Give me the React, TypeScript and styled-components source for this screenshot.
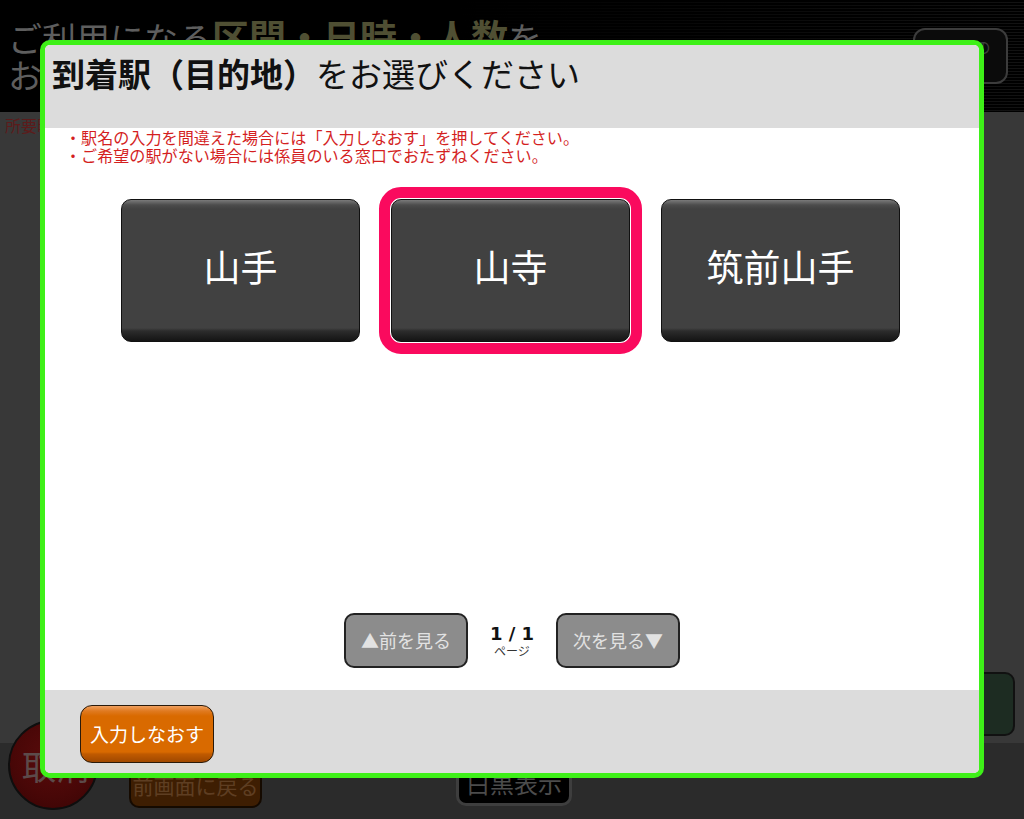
import React from "react";
import styled, { createGlobalStyle } from "styled-components";

const JP = `"Noto Sans CJK JP", "Noto Sans", "DejaVu Sans", sans-serif`;

const GlobalStyle = createGlobalStyle`
  html, body {
    margin: 0;
    padding: 0;
    background: #383838;
    overflow: hidden;
  }
  body {
    font-family: ${JP};
  }
  * {
    box-sizing: border-box;
  }
`;

/* ---------- dimmed screen behind the dialog ---------- */

const Screen = styled.div`
  width: 1024px;
  height: 819px;
  display: flex;
  flex-direction: column;
`;

const TopBar = styled.header`
  height: 112px;
  flex: none;
  display: flex;
  align-items: center;
  justify-content: space-between;
  padding: 0 16px 0 8px;
  background-image: linear-gradient(to right, #000 45%, rgba(0, 0, 0, 0) 100%),
    repeating-linear-gradient(to bottom, #000 0 2px, #121212 2px 3px);
`;

const Lead = styled.div`
  font-size: 34px;
  line-height: 37px;
  color: #5e5e5e;
  margin-top: -2px;
  white-space: nowrap;
`;

const Strong = styled.b`
  color: #4f4f33;
  font-weight: 700;
  font-size: 37px;
`;

const GuideBox = styled.div`
  width: 95px;
  height: 56px;
  border: 2px solid #3c3c3c;
  border-radius: 12px;
  background: #0b0b0b;
  color: #3e3e3e;
  font-size: 15px;
  line-height: 18px;
  display: flex;
  align-items: center;
  justify-content: center;
  text-align: center;
`;

const Middle = styled.main`
  flex: 1;
  display: flex;
  flex-direction: column;
  justify-content: space-between;
  align-items: flex-start;
  padding: 3px 9px 7px 5px;
  background: #383838;
`;

const Duration = styled.div`
  font-size: 16px;
  line-height: 20px;
  color: #5c1b1b;
`;

const SideButton = styled.div`
  align-self: flex-end;
  width: 140px;
  height: 64px;
  border: 2px solid #111;
  border-radius: 10px;
  background: #1d2c22;
`;

const BottomBar = styled.footer`
  height: 76px;
  flex: none;
  display: flex;
  align-items: flex-end;
  padding: 0 0 0 8px;
  background: #2b2b2b;
`;

const CancelCircle = styled.div`
  width: 90px;
  height: 90px;
  margin-bottom: 9px;
  border-radius: 50%;
  border: 2px solid #0e0e0e;
  background: radial-gradient(circle at 50% 40%, #5a0b0b 0%, #480707 60%, #380404 100%);
  color: #5c4a4a;
  font-size: 34px;
  display: flex;
  align-items: center;
  padding-left: 12px;
`;

const BackButton = styled.div`
  width: 133px;
  height: 46px;
  margin: 0 0 11px 31px;
  border: 2px solid #150a00;
  border-radius: 10px;
  background: #3e1e02;
  color: #5e3e22;
  font-size: 21px;
  display: flex;
  align-items: flex-end;
  justify-content: center;
  padding-bottom: 6px;
`;

const MonoButton = styled.div`
  width: 116px;
  height: 40px;
  margin: 0 0 13px 194px;
  border: 3px solid #3e3e3e;
  border-radius: 10px;
  background: #000;
  color: #4c4c4c;
  font-size: 24px;
  line-height: 1;
  display: flex;
  align-items: flex-end;
  justify-content: center;
  padding-bottom: 8px;
`;

/* ---------- dialog ---------- */

const Backdrop = styled.div`
  position: fixed;
  inset: 0;
  z-index: 10;
  padding: 40px 40px 41px;
  display: flex;
`;

const Dialog = styled.section`
  flex: 1;
  display: flex;
  flex-direction: column;
  border: 5px solid #3ef018;
  border-radius: 10px;
  background: #fff;
  overflow: hidden;
`;

const DialogHeader = styled.div`
  height: 83px;
  flex: none;
  background: #dcdcdc;
  padding: 8px 0 0 7px;
`;

const Title = styled.h1`
  margin: 0;
  font-size: 33px;
  line-height: 40px;
  font-weight: 400;
  color: #111;
  white-space: nowrap;
`;

const TitleStrong = styled.span`
  font-weight: 700;
`;

const DialogBody = styled.div`
  flex: 1;
  display: flex;
  flex-direction: column;
  padding: 0 0 22px 20px;
`;

const Notes = styled.ul`
  margin: 0;
  padding: 0;
  list-style: none;
  font-size: 16.1px;
  line-height: 18px;
  color: #d41f1f;
`;

const StationRow = styled.div`
  display: flex;
  justify-content: center;
  gap: 31px;
  margin: 35px 23px 0 0;
`;

const StationButton = styled.button<{ $selected?: boolean }>`
  width: 239px;
  height: 143px;
  border: 1px solid #111;
  border-radius: 10px;
  background: linear-gradient(
    to bottom,
    #7a7a7a 0px,
    #4c4c4c 5px,
    #414141 9px,
    #414141 calc(100% - 13px),
    #2c2c2c calc(100% - 10px),
    #141414 100%
  );
  color: #fff;
  font-family: ${JP};
  font-size: 37px;
  padding: 0 0 10px;
  cursor: pointer;
  outline: ${(p) => (p.$selected ? "11px solid #fa0a5e" : "none")};
  outline-offset: 1px;
`;

const Pager = styled.div`
  margin-top: auto;
  margin-right: 20px;
  display: flex;
  justify-content: center;
  align-items: center;
`;

const PageButton = styled.button`
  width: 124px;
  height: 55px;
  border: 2px solid #222;
  border-radius: 10px;
  background: #8c8c8c;
  color: #e2e2e2;
  font-family: ${JP};
  font-size: 18px;
  padding: 0 0 2px;
  cursor: pointer;
`;

const PageCount = styled.div`
  width: 88px;
  display: flex;
  flex-direction: column;
  align-items: center;
  color: #111;
`;

const PageNumber = styled.span`
  font-family: "DejaVu Sans", sans-serif;
  font-weight: 700;
  font-size: 18px;
  line-height: 20px;
`;

const PageLabel = styled.span`
  font-size: 12px;
  line-height: 14px;
  color: #333;
`;

const DialogFooter = styled.div`
  height: 83px;
  flex: none;
  background: #dcdcdc;
  display: flex;
  align-items: flex-start;
  padding: 15px 0 0 35px;
`;

const RetryButton = styled.button`
  width: 134px;
  height: 58px;
  border: 1.5px solid #2a1a0a;
  border-radius: 12px;
  background: linear-gradient(
    to bottom,
    #f0a060 0px,
    #e07a20 5px,
    #d96a00 10px,
    #d96a00 calc(100% - 10px),
    #c05a00 calc(100% - 8px),
    #a04800 100%
  );
  color: #fff;
  font-family: ${JP};
  font-size: 19px;
  padding: 0 0 2px;
  cursor: pointer;
`;

const stations = ["山手", "山寺", "筑前山手"];

export default function App() {
  const selected = 1;

  return (
    <>
      <GlobalStyle />
      <Screen>
        <TopBar>
          <Lead>
            ご利用になる<Strong>区間・日時・人数</Strong>を
            <br />
            お選びください
          </Lead>
          <GuideBox>
            ご利用の
            <br />
            手引き
          </GuideBox>
        </TopBar>
        <Middle>
          <Duration>所要時間</Duration>
          <SideButton />
        </Middle>
        <BottomBar>
          <CancelCircle>取消</CancelCircle>
          <BackButton>前画面に戻る</BackButton>
          <MonoButton>白黒表示</MonoButton>
        </BottomBar>
      </Screen>

      <Backdrop>
        <Dialog>
          <DialogHeader>
            <Title>
              <TitleStrong>到着駅（目的地）</TitleStrong>をお選びください
            </Title>
          </DialogHeader>
          <DialogBody>
            <Notes>
              <li>・駅名の入力を間違えた場合には「入力しなおす」を押してください。</li>
              <li>・ご希望の駅がない場合には係員のいる窓口でおたずねください。</li>
            </Notes>
            <StationRow>
              {stations.map((name, i) => (
                <StationButton key={name} $selected={i === selected}>
                  {name}
                </StationButton>
              ))}
            </StationRow>
            <Pager>
              <PageButton>▲前を見る</PageButton>
              <PageCount>
                <PageNumber>1 / 1</PageNumber>
                <PageLabel>ページ</PageLabel>
              </PageCount>
              <PageButton>次を見る▼</PageButton>
            </Pager>
          </DialogBody>
          <DialogFooter>
            <RetryButton>入力しなおす</RetryButton>
          </DialogFooter>
        </Dialog>
      </Backdrop>
    </>
  );
}
